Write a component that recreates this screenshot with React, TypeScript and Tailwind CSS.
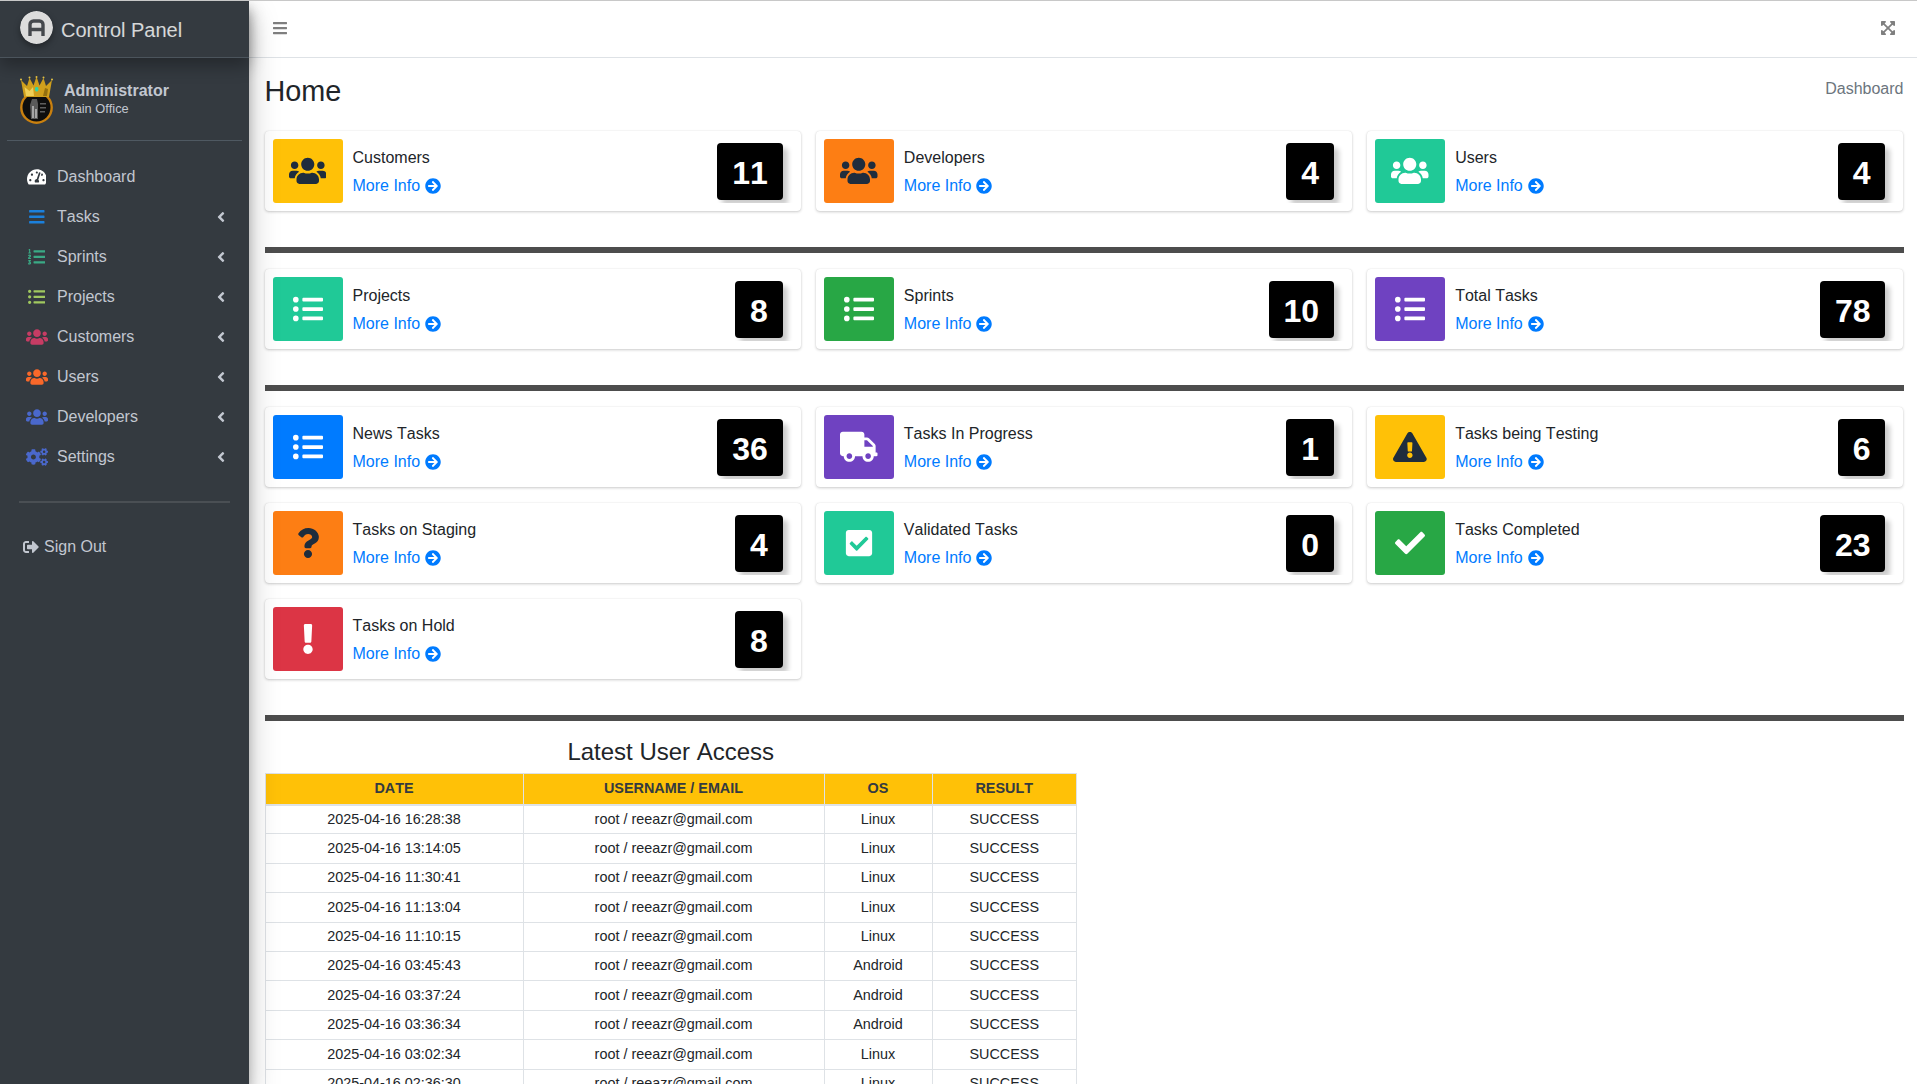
import React from "react";
import {
  FaUsers, FaListUl, FaTruck, FaExclamationTriangle, FaQuestion, FaCheckSquare, FaCheck,
  FaExclamation, FaArrowCircleRight, FaTachometerAlt, FaBars, FaListOl, FaCogs,
  FaExpandArrowsAlt, FaSignOutAlt, FaAngleLeft,
} from "react-icons/fa";

type Stat = { title: string; n: number; bg: string; icon: React.ReactNode };
const DK = "#1f2d3d";
const u = (c: string) => <FaUsers size={37.5} color={c} />;
const l = <FaListUl size={30} color="#fff" />;

const row1: Stat[] = [
  { title: "Customers", n: 11, bg: "bg-[#ffc107]", icon: u(DK) },
  { title: "Developers", n: 4, bg: "bg-[#fd7e14]", icon: u(DK) },
  { title: "Users", n: 4, bg: "bg-[#20c997]", icon: u("#fff") },
];
const row2: Stat[] = [
  { title: "Projects", n: 8, bg: "bg-[#20c997]", icon: l },
  { title: "Sprints", n: 10, bg: "bg-[#28a745]", icon: l },
  { title: "Total Tasks", n: 78, bg: "bg-[#6f42c1]", icon: l },
];
const row3: Stat[] = [
  { title: "News Tasks", n: 36, bg: "bg-[#007bff]", icon: l },
  { title: "Tasks In Progress", n: 1, bg: "bg-[#6f42c1]", icon: <FaTruck size={37.5} color="#fff" /> },
  { title: "Tasks being Testing", n: 6, bg: "bg-[#ffc107]", icon: <FaExclamationTriangle size={33.75} color={DK} /> },
  { title: "Tasks on Staging", n: 4, bg: "bg-[#fd7e14]", icon: <FaQuestion size={30} color={DK} /> },
  { title: "Validated Tasks", n: 0, bg: "bg-[#20c997]", icon: <FaCheckSquare size={30} color="#fff" /> },
  { title: "Tasks Completed", n: 23, bg: "bg-[#28a745]", icon: <FaCheck size={30} color="#fff" /> },
  { title: "Tasks on Hold", n: 8, bg: "bg-[#dc3545]", icon: <FaExclamation size={30} color="#fff" /> },
];

const access: [string, string][] = [
  ["2025-04-16 16:28:38", "Linux"],
  ["2025-04-16 13:14:05", "Linux"],
  ["2025-04-16 11:30:41", "Linux"],
  ["2025-04-16 11:13:04", "Linux"],
  ["2025-04-16 11:10:15", "Linux"],
  ["2025-04-16 03:45:43", "Android"],
  ["2025-04-16 03:37:24", "Android"],
  ["2025-04-16 03:36:34", "Android"],
  ["2025-04-16 03:02:34", "Linux"],
  ["2025-04-16 02:36:30", "Linux"],
];

const nav: { label: string; icon: React.ReactNode; chev: boolean }[] = [
  { label: "Dashboard", icon: <FaTachometerAlt size={19.8} color="#ffffff" />, chev: false },
  { label: "Tasks", icon: <FaBars size={17.6} color="#1b80dc" />, chev: true },
  { label: "Sprints", icon: <FaListOl size={17.6} color="#3aaa85" />, chev: true },
  { label: "Projects", icon: <FaListUl size={17.6} color="#a0c85f" />, chev: true },
  { label: "Customers", icon: <FaUsers size={22} color="#c73c64" />, chev: true },
  { label: "Users", icon: <FaUsers size={22} color="#f9682a" />, chev: true },
  { label: "Developers", icon: <FaUsers size={22} color="#4a68cc" />, chev: true },
  { label: "Settings", icon: <FaCogs size={22} color="#4a68cc" />, chev: true },
];

function Logo() {
  return (
    <svg width="33" height="33" viewBox="0 0 33 33" className="-mt-[3px] shrink-0 rounded-full shadow-[0_3px_6px_rgba(0,0,0,0.35)]">
      <circle cx="16.5" cy="16.5" r="16.5" fill="#dcdcdc" />
      <path d="M10 25V13.5a3.5 3.5 0 0 1 3.5-3.5h6a3.5 3.5 0 0 1 3.5 3.5V25M10 18.5h13" fill="none" stroke="#45484d" strokeWidth="3.4" />
    </svg>
  );
}

function Avatar() {
  return (
    <svg width="33" height="48" viewBox="0 0 33 48" className="shrink-0">
      <circle cx="16.5" cy="31.5" r="15.2" fill="#0e0e0e" stroke="#c9800f" strokeWidth="2.4" />
      <path d="M12 23h5l1 5v15h-7l-1-14z" fill="#5a5a5a" />
      <path d="M12 30h2v12h-2zM15 33h2v9h-2z" fill="#a5a5a5" />
      <path d="M20 27h6v1.4h-6zM20 31h6v1.4h-6zM20 35h5v1.4h-5z" fill="#5e5e5e" />
      <path d="M4 21 L1 4 L7 10 L9.5 2 L13.5 9.5 L16.5 0.5 L19.5 9.5 L23.5 2 L26 10 L32 4 L29 21 Z" fill="#cf9f1c" />
      <path d="M6 20 L4.5 11 L9.5 15 L13 11 L14 20 Z" fill="#efcf58" />
      <path d="M23 20 L25 12 L28 13 L27 20 Z" fill="#94700f" />
      <circle cx="1" cy="3.5" r="1" fill="#e8c547" />
      <circle cx="9.5" cy="1.5" r="1" fill="#e8c547" />
      <circle cx="16.5" cy="1" r="1" fill="#e8c547" />
      <circle cx="23.5" cy="1.5" r="1" fill="#e8c547" />
      <circle cx="32" cy="3.5" r="1" fill="#e8c547" />
      <rect x="15" y="11" width="3.4" height="4.5" rx="1.4" fill="#2dd4a8" />
    </svg>
  );
}

function Divider() {
  return <div className="mt-[36px] mb-[16px] h-[6px] bg-[#4d4d4d]" />;
}

function Card({ s }: { s: Stat }) {
  return (
    <div className="rounded bg-white p-2 shadow-[0_0_1px_rgba(0,0,0,0.125),0_1px_3px_rgba(0,0,0,0.2)]">
      <div className="flex h-[64px] overflow-hidden">
        <div className={`flex w-[70px] shrink-0 items-center justify-center rounded-[3px] ${s.bg}`}>{s.icon}</div>
        <div className="ml-[10px] flex flex-1 flex-col justify-center gap-1 pt-[2px] text-base leading-6">
          <span className="text-[#212529]">{s.title}</span>
          <span className="flex items-center text-[#007bff]">
            More Info
            <FaArrowCircleRight size={16} className="ml-[5px]" />
          </span>
        </div>
        <div className="mt-1 mr-[10px] flex h-[57px] items-center rounded bg-black px-[15px] pt-[2px] text-[32px] font-bold text-white shadow-[5px_5px_5px_#ccc]">
          {s.n}
        </div>
      </div>
    </div>
  );
}

function Grid({ items }: { items: Stat[] }) {
  return (
    <div className="grid grid-cols-3 gap-x-[15px] gap-y-[16px]">
      {items.map((s) => (
        <Card key={s.title} s={s} />
      ))}
    </div>
  );
}

export default function App() {
  return (
    <div className="flex h-[1084px] w-full overflow-hidden border-t border-[#c8c8c8] bg-white font-['Liberation_Sans',sans-serif] text-[#212529] [font-kerning:none]">
      <aside className="relative z-10 flex h-full w-[249px] shrink-0 flex-col bg-[#343a40] text-[#c2c7d0] shadow-[0_14px_28px_rgba(0,0,0,0.25),0_10px_10px_rgba(0,0,0,0.22)]">
        <div className="relative z-10 flex h-[57px] items-center gap-2 border-b border-[#4b545c] pl-5 shadow-[0_8px_16px_rgba(0,0,0,0.3)]">
          <Logo />
          <span className="mt-[2px] text-[20px] text-white/80">Control Panel</span>
        </div>
        <div className="mx-[7px] flex h-[83px] items-start gap-[11px] border-b border-[#4f5962] pt-[18px] pl-[13px]">
          <Avatar />
          <div className="mt-[3px] flex flex-col">
            <span className="text-base leading-6 font-bold">Administrator</span>
            <span className="-mt-[1px] text-[12.8px] leading-[14px]">Main Office</span>
          </div>
        </div>
        <nav className="mt-[16px] flex flex-col">
          {nav.map((n) => (
            <div key={n.label} className="flex h-[40px] items-center pl-[24px]">
              <span className="flex w-[25px] justify-center">{n.icon}</span>
              <span className="ml-2 flex-1 text-base">{n.label}</span>
              {n.chev && <FaAngleLeft size={16} className="mr-[20px]" />}
            </div>
          ))}
        </nav>
        <div className="mx-[19px] mt-[24px] h-[2px] bg-[#4a4f54]" />
        <div className="mt-[32px] flex items-center gap-[5px] pl-[23px] text-base leading-6">
          <FaSignOutAlt size={16} />
          <span>Sign Out</span>
        </div>
      </aside>

      <main className="flex min-w-0 flex-1 flex-col">
        <header className="flex h-[57px] shrink-0 items-center justify-between border-b border-[#dee2e6] pr-[21px] pb-[2px] pl-[23px] text-[#7f7f7f]">
          <FaBars size={16} />
          <FaExpandArrowsAlt size={16} />
        </header>
        <div className="pr-[13.5px] pl-[15.5px]">
          <div className="flex h-[73px] items-start justify-between">
            <h1 className="mt-[15px] text-[28.8px] leading-[37px] text-[#212529]">Home</h1>
            <span className="mt-[19px] text-base leading-6 text-[#6c757d]">Dashboard</span>
          </div>
          <Grid items={row1} />
          <Divider />
          <Grid items={row2} />
          <Divider />
          <Grid items={row3} />
          <Divider />
          <table className="w-[811.5px] table-fixed border-collapse text-center text-[14.4px] text-[#212529]">
            <caption className="caption-top pb-[7px] text-center text-[24px] leading-[29px]">Latest User Access</caption>
            <thead>
              <tr className="bg-[#ffc107] font-bold text-[#343a40]">
                <th className="h-[31px] w-[258px] border border-b-2 border-[#dee2e6] pt-[1px] font-bold">DATE</th>
                <th className="h-[31px] w-[301px] border border-b-2 border-[#dee2e6] pt-[1px] font-bold">USERNAME / EMAIL</th>
                <th className="h-[31px] w-[108px] border border-b-2 border-[#dee2e6] pt-[1px] font-bold">OS</th>
                <th className="h-[31px] w-[144.5px] border border-b-2 border-[#dee2e6] pt-[1px] font-bold">RESULT</th>
              </tr>
            </thead>
            <tbody>
              {access.map(([d, os]) => (
                <tr key={d} className="h-[29.4px]">
                  <td className="border border-[#dee2e6] p-0">{d}</td>
                  <td className="border border-[#dee2e6] p-0">root / reeazr@gmail.com</td>
                  <td className="border border-[#dee2e6] p-0">{os}</td>
                  <td className="border border-[#dee2e6] p-0">SUCCESS</td>
                </tr>
              ))}
            </tbody>
          </table>
        </div>
      </main>
    </div>
  );
}
